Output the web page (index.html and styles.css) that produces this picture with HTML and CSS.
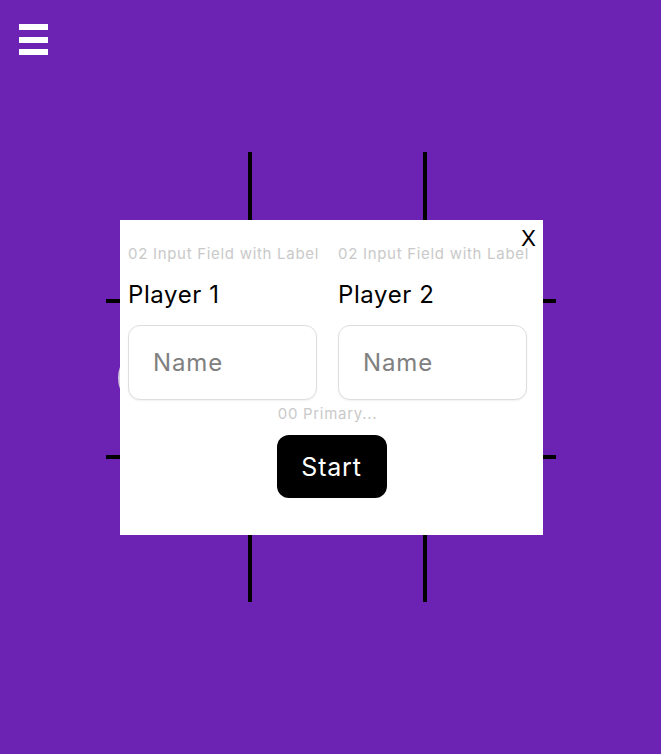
FILE: index.html
```html
<!DOCTYPE html>
<html lang="en">
<head>
    <meta charset="UTF-8">
    <meta name="viewport" content="width=device-width, initial-scale=1.0">
    <title>Tic Tac Toe</title>
    <link rel="stylesheet" href="styles.css">
</head>
<body>
    <div class="page">
        <header class="topbar">
            <button class="menu-btn" aria-label="Menu">
                <span class="bar"></span>
                <span class="bar"></span>
                <span class="bar"></span>
            </button>
        </header>

        <div class="board">
            <div class="cell"></div>
            <div class="cell mid-col"></div>
            <div class="cell"></div>
            <div class="cell mid-row"><span class="mark-o"></span></div>
            <div class="cell mid-row mid-col"></div>
            <div class="cell mid-row"></div>
            <div class="cell"></div>
            <div class="cell mid-col"></div>
            <div class="cell"></div>
        </div>

        <div class="modal">
            <button class="close-btn">X</button>
            <div class="fields">
                <div class="field">
                    <p class="tag">02 Input Field with Label</p>
                    <label for="player1">Player 1</label>
                    <input type="text" id="player1" placeholder="Name">
                </div>
                <div class="field">
                    <p class="tag">02 Input Field with Label</p>
                    <label for="player2">Player 2</label>
                    <input type="text" id="player2" placeholder="Name">
                </div>
            </div>
            <p class="tag primary-tag">00 Primary...</p>
            <div class="actions">
                <button class="start-btn">Start</button>
            </div>
        </div>
    </div>
</body>
</html>
```

FILE: styles.css
```css
body {
    margin: 0;
    background-color: #6c22b3;
    font-family: 'Inter', 'Noto Sans', sans-serif;
    color: #000;
}

.page {
    position: relative;
    width: 661px;
    height: 754px;
    overflow: hidden;
}

.topbar {
    padding: 24px 0 0 19px;
    height: 31px;
}

.menu-btn {
    display: flex;
    flex-direction: column;
    gap: 6.5px;
    padding: 0;
    border: none;
    background: none;
    cursor: pointer;
}

.menu-btn .bar {
    display: block;
    width: 29px;
    height: 6px;
    background: #fff;
}

/* tic tac toe board */
.board {
    display: grid;
    grid-template-columns: 142px 179px 129px;
    grid-template-rows: 147px 160px 143px;
    width: 450px;
    margin: 97px 0 0 106px;
}

.cell {
    display: flex;
    align-items: center;
    box-sizing: border-box;
}

.cell.mid-col {
    border-left: 4px solid #000;
    border-right: 4px solid #000;
}

.cell.mid-row {
    border-top: 4px solid #000;
    border-bottom: 4px solid #000;
}

.mark-o {
    width: 58px;
    height: 58px;
    margin: -2px 0 0 12px;
    border: 2px solid #d3c9df;
    border-radius: 50%;
}

/* player modal */
.modal {
    position: absolute;
    left: 120px;
    top: 220px;
    width: 423px;
    height: 315px;
    box-sizing: border-box;
    padding: 25px 8px 0 8px;
    background: #fff;
}

.close-btn {
    position: absolute;
    top: 7px;
    right: 7px;
    padding: 0;
    border: none;
    background: none;
    font-family: inherit;
    font-size: 22px;
    line-height: 1;
    color: #000;
    cursor: pointer;
}

.fields {
    display: flex;
    gap: 21px;
    width: 399px;
}

.field {
    width: 189px;
}

.tag {
    margin: 0;
    font-size: 15px;
    line-height: 18px;
    letter-spacing: 0.7px;
    color: #c9c9c9;
    white-space: nowrap;
}

.field label {
    display: block;
    margin-top: 17px;
    font-size: 24px;
    line-height: 29px;
    letter-spacing: 0.6px;
}

.field input {
    display: block;
    width: 189px;
    height: 75px;
    box-sizing: border-box;
    margin-top: 16px;
    padding: 0 0 0 24px;
    border: 1px solid #dedede;
    border-radius: 12px;
    box-shadow: 0 1px 2px rgba(0, 0, 0, 0.06);
    font-family: inherit;
    font-size: 24px;
    letter-spacing: 0.9px;
    color: #000;
    outline: none;
}

.field input::placeholder {
    color: #808080;
}

.primary-tag {
    width: 399px;
    margin-top: 5px;
    text-align: center;
}

.actions {
    display: flex;
    justify-content: center;
    margin-top: 12px;
}

.start-btn {
    width: 110px;
    height: 63px;
    border: none;
    border-radius: 12px;
    background: #000;
    color: #fff;
    font-family: inherit;
    font-size: 25px;
    letter-spacing: 0.8px;
    cursor: pointer;
}
```
